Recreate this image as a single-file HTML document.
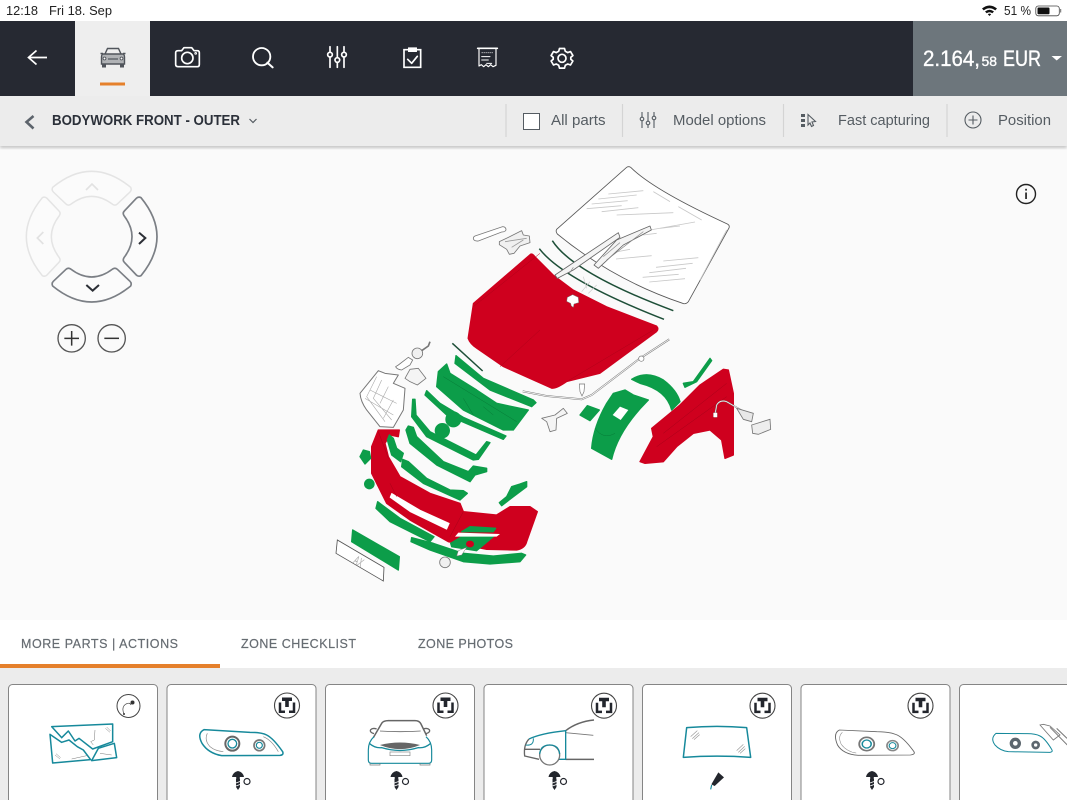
<!DOCTYPE html>
<html><head><meta charset="utf-8"><style>
html,body{margin:0;padding:0;background:#fafafa;width:1067px;height:800px;overflow:hidden}
svg{display:block;font-family:"Liberation Sans",sans-serif;filter:blur(.3px)}
</style></head><body>
<svg width="1067" height="800" viewBox="0 0 1067 800" xmlns="http://www.w3.org/2000/svg">
<defs>
<filter id="sh" x="-5%" y="-20%" width="110%" height="150%"><feGaussianBlur stdDeviation="1.5"/></filter>
<g id="badge"><circle cx="0" cy="0" r="12.500" fill="#fff" stroke="#444" stroke-width="1.100"/>
<path d="M-7 -3V6.200H-2M7 -3V6.200H2" fill="none" stroke="#23262d" stroke-width="2.500"/><path d="M-5 -8H5V-4.500H1.800V1.500H-1.800V-4.500H-5Z" fill="#23262d"/></g>
<g id="screw"><path d="M-6 -3Q-5 -8 0 -9Q5 -8 6 -3H1.800V-1H-1.800V-3Z" fill="#23262d"/><path d="M-2 -1H2V7L0 10L-2 7Z" fill="#23262d"/><path d="M-2 3L2 1.500M-2 6L2 4.500" stroke="#fff" stroke-width=".8"/><circle cx="9" cy="1.500" r="3" fill="#fff" stroke="#23262d" stroke-width="1.200"/></g>
</defs>

<!-- status bar -->
<rect width="1067" height="21" fill="#fff"/>
<text x="6" y="15" font-size="12.500" fill="#222" textLength="32" lengthAdjust="spacingAndGlyphs">12:18</text>
<text x="49" y="15" font-size="12.500" fill="#222" textLength="63" lengthAdjust="spacingAndGlyphs">Fri 18. Sep</text>
<g fill="#111"><path d="M982 8.500Q989.500 2.500 997 8.500L995.300 10.400Q989.500 6 983.700 10.400Z"/><path d="M985 11.500Q989.500 8 994 11.500L992.300 13.300Q989.500 11.200 986.700 13.300Z"/><path d="M987.800 14.300Q989.500 13 991.200 14.300L989.500 16Z"/></g>
<text x="1004" y="15" font-size="12.500" fill="#222" textLength="27" lengthAdjust="spacingAndGlyphs">51 %</text>
<rect x="1035.800" y="6" width="23.500" height="9.800" rx="2.500" fill="none" stroke="#444" stroke-width=".8"/>
<rect x="1037.500" y="7.500" width="12" height="6.800" rx="1" fill="#111"/><rect x="1060.200" y="9" width="1" height="3.500" fill="#666"/>

<!-- header -->
<rect y="21" width="1067" height="75" fill="#262932"/>
<rect x="75" y="21" width="75" height="75" fill="#eeeeee"/>
<rect x="913" y="21" width="154" height="75" fill="#6d767c"/>
<path d="M47 57.500H28.500M36.500 50.500L28.500 57.500L36.500 64.500" fill="none" stroke="#fff" stroke-width="1.700"/>
<g transform="translate(160,30) scale(.33333)" fill="none" stroke="#fff" stroke-width="5" stroke-linejoin="round" stroke-linecap="round">
<path d="M47 68Q47 62 55 62H65L72 53H95L102 62H112Q118 62 118 68V103Q118 110 112 110H55Q47 110 47 103Z"/>
<circle cx="82" cy="84" r="17"/><circle cx="107" cy="70" r="1.500"/>
<circle cx="305" cy="80" r="26" stroke-width="5.500"/><path d="M322 98L338 112" stroke-width="6"/>
<path d="M510 50V112M532 50V112M552 50V112"/>
<circle cx="510" cy="74" r="7" fill="#262932"/><circle cx="532" cy="90" r="7" fill="#262932"/><circle cx="552" cy="74" r="7" fill="#262932"/>
<path d="M745 59H732V112H782V59H770" stroke-linejoin="miter"/><rect x="745" y="53" width="25" height="12" fill="#fff" stroke-width="2"/><path d="M743 88L755 100L772 79"/>
<path d="M957 55V108L964 104L971 110L978 104L985 110L992 104L999 110L1008 106V55" stroke-width="3.500"/><path d="M953 55H1012" stroke-width="5"/>
<path d="M965 68H1000" stroke-width="2.500" stroke-dasharray="3 3" stroke-linecap="butt"/><path d="M965 80H990M965 90H985M980 100H995" stroke-width="3"/>
</g>
<g transform="translate(0,-.7)"><path d="M559.500 49.200L564.500 49.200L565.300 52L567.800 53.300L570.500 52.300L572.900 56.300L570.800 58L570.800 60L572.900 61.700L570.500 65.700L567.800 64.700L565.300 66L564.500 68.800L559.500 68.800L558.700 66L556.200 64.700L553.500 65.700L551.100 61.700L553.200 60L553.200 58L551.100 56.300L553.500 52.300L556.200 53.300L558.700 52Z" fill="none" stroke="#fff" stroke-width="1.700" stroke-linejoin="round"/><circle cx="562" cy="59" r="4" fill="none" stroke="#fff" stroke-width="1.700"/></g>
<!-- car icon -->
<g fill="none" stroke="#50545b" stroke-width="1.400"><path d="M105 54L107.500 48.500H118.500L121 54"/><path d="M103 54H123Q124.500 54.500 124.500 57V64H101.500V57Q101.500 54.500 103 54Z" fill="#b0b2b5"/><path d="M100.500 53.500H103M123 53.500H125.500" stroke-width="1.600"/><path d="M108 59H118" stroke-width="1.200"/><rect x="102" y="64" width="4" height="3.500" fill="#50545b" stroke="none"/><rect x="120" y="64" width="4" height="3.500" fill="#50545b" stroke="none"/><circle cx="104.500" cy="58.500" r="1.400" fill="#fff" stroke-width=".9"/><circle cx="121.500" cy="58.500" r="1.400" fill="#fff" stroke-width=".9"/></g>
<rect x="100" y="82.500" width="25" height="3" fill="#e5802b"/>
<!-- price -->
<g fill="#fff" stroke="#fff" stroke-width=".35">
<text x="923" y="66" font-size="22" textLength="57" lengthAdjust="spacingAndGlyphs">2.164,</text>
<text x="981.500" y="66" font-size="14" textLength="15.500" lengthAdjust="spacingAndGlyphs">58</text>
<text x="1003" y="66" font-size="22" textLength="38" lengthAdjust="spacingAndGlyphs">EUR</text>
</g>
<path d="M1051.500 56H1062L1056.700 60.500Z" fill="#fff"/>

<!-- toolbar -->
<rect y="143" width="1067" height="5" fill="#000" opacity=".22" filter="url(#sh)"/>
<rect y="96" width="1067" height="50" fill="#ececec"/>
<path d="M33.500 116L26.500 122L33.500 128.500" fill="none" stroke="#5d646c" stroke-width="2.600"/>
<text x="52" y="125" font-size="14.500" font-weight="700" fill="#2b3039" textLength="188" lengthAdjust="spacingAndGlyphs">BODYWORK FRONT - OUTER</text>
<path d="M249.500 119L253 122.500L256.500 119" fill="none" stroke="#555c62" stroke-width="1.200"/>
<g stroke="#d4d4d4" stroke-width="1.200"><path d="M506 104V137M622.500 104V137M783.500 104V137M947 104V137"/></g>
<rect x="523.500" y="113.500" width="16" height="16" fill="#fff" stroke="#555c62" stroke-width="1"/>
<g font-size="15" fill="#555c62">
<text x="551" y="125" textLength="54.500" lengthAdjust="spacingAndGlyphs">All parts</text>
<text x="673" y="125" textLength="93" lengthAdjust="spacingAndGlyphs">Model options</text>
<text x="838" y="125" textLength="92" lengthAdjust="spacingAndGlyphs">Fast capturing</text>
<text x="998" y="125" textLength="53" lengthAdjust="spacingAndGlyphs">Position</text>
</g>
<g fill="none" stroke="#555c62" stroke-width="1.100">
<path d="M642 112V128M648 112V128M654 112V128"/><circle cx="642" cy="119" r="1.800" fill="#ececec"/><circle cx="648" cy="123" r="1.800" fill="#ececec"/><circle cx="654" cy="118" r="1.800" fill="#ececec"/>
<path d="M808 114.500L815.500 121.500L812 122L813.500 125.500L811.500 126.500L810 123L808 125Z"/>
<circle cx="973" cy="120" r="8"/><path d="M973 115.500V124.500M968.500 120H977.500"/>
</g>
<g fill="#555c62"><rect x="801" y="114" width="4" height="3"/><rect x="801" y="119" width="4" height="3"/><rect x="801" y="124" width="4" height="3"/></g>

<!-- info -->
<circle cx="1026" cy="194" r="9.500" fill="none" stroke="#222" stroke-width="1.400"/>
<rect x="1025.200" y="192.500" width="1.700" height="6.500" fill="#222"/><rect x="1025.200" y="188.800" width="1.700" height="1.800" fill="#222"/>

<!-- nav pad -->
<g transform="translate(10,160) scale(.33333)">
<defs><path id="seg" d="M128 82Q245 -14 362 82Q366 90 360 96L322 132Q316 138 308 133Q245 85 182 133Q174 138 168 132L130 96Q124 90 128 82Z"/></defs>
<use href="#seg" fill="#fbfbfb" stroke="#e4e4e4" stroke-width="4.500"/>
<use href="#seg" transform="rotate(-90 245 230)" fill="#fbfbfb" stroke="#e4e4e4" stroke-width="4.500"/>
<use href="#seg" transform="rotate(90 245 230)" fill="#fbfbfb" stroke="#7b7f85" stroke-width="5"/>
<use href="#seg" transform="rotate(180 245 230)" fill="#fbfbfb" stroke="#7b7f85" stroke-width="5"/>
<path d="M228 90L246 72L264 90" fill="none" stroke="#e2e2e2" stroke-width="5"/>
<path d="M100 216L82 234L100 252" fill="none" stroke="#e2e2e2" stroke-width="5"/>
<path d="M387 218L406 234L387 252" fill="none" stroke="#2c2f36" stroke-width="6"/>
<path d="M229 375L248 392L267 375" fill="none" stroke="#2c2f36" stroke-width="6"/>
<circle cx="185" cy="535" r="41" fill="none" stroke="#555" stroke-width="4"/><path d="M185 513V557M163 535H207" stroke="#333" stroke-width="4.500"/>
<circle cx="305" cy="535" r="41" fill="none" stroke="#555" stroke-width="4"/><path d="M283 535H327" stroke="#333" stroke-width="4.500"/>
</g>

<!-- exploded drawing: upper -->
<g transform="translate(440,160) scale(.33333)">
<path d="M350 208L560 22Q566 18 572 22Q640 90 862 192Q870 196 867 204L745 425Q738 434 728 430Q520 360 352 222Q346 214 350 208Z" fill="#fff" stroke="#555" stroke-width="2.500"/>
<g stroke="#c8c8c8" stroke-width="2.500" fill="none"><path d="M505 102L610 92M475 117L590 105M455 132L563 122M440 146L545 137M485 155L595 143M530 165L700 158M630 210L765 186M660 205L720 198M610 225L650 220M670 303L775 293M648 322L758 310M628 338L738 325M608 352L716 343M628 366L735 356M528 297L635 287M495 282L570 268M715 140L785 180M640 95L690 125M860 210L780 360"/></g>
<path d="M337 242Q400 340 700 452" fill="none" stroke="#1e4f38" stroke-width="4.500"/>
<path d="M298 266Q370 360 672 478" fill="none" stroke="#1e4f38" stroke-width="4.500"/>
<path d="M272 282L100 430L84 535Q90 552 110 565L190 620L335 685Q350 686 380 665L480 640L650 515Q658 507 650 498L500 440L400 390L340 345L285 290Q278 280 272 282Z" fill="#cf001e" stroke="#cf001e" stroke-width="3" stroke-linejoin="round"/>
<path d="M100 440L300 280M180 620L300 510M380 665L640 510" stroke="#b00018" stroke-width="1.500" fill="none"/>
<path d="M382 412L398 404L415 412L416 428L402 432L400 442L394 438L392 430L380 424Z" fill="#fff" stroke="#777" stroke-width="1.500"/>
<path d="M345 345L535 218L540 232L400 330L352 355Z" fill="#f4f4f4" stroke="#666" stroke-width="2.500" stroke-linejoin="round"/>
<path d="M462 315L530 240L630 198L634 210L550 255L475 325Z" fill="#f4f4f4" stroke="#666" stroke-width="2.500" stroke-linejoin="round"/>
<path d="M400 322L388 340M490 290L540 248M500 300L610 215" stroke="#888" stroke-width="2"/>
<g stroke="#ccc" stroke-width="2"><path d="M430 350L440 385M450 365L425 395M470 375L445 400"/></g>
<path d="M105 228L188 200Q198 200 198 210Q195 216 185 216L115 243Q102 244 100 236Q100 230 105 228Z" fill="#fff" stroke="#777" stroke-width="2.500"/>
<path d="M178 245L205 232L245 212L250 225L268 228L270 248L240 258L222 280L208 283L200 268L178 254Z" fill="#f0f0f0" stroke="#777" stroke-width="2.500" stroke-linejoin="round"/>
<path d="M195 245L260 235M215 262L250 240" stroke="#999" stroke-width="2.500"/>
<path d="M37 550L128 633" stroke="#1e4f38" stroke-width="4.500"/>
<path d="M248 694L320 708L425 718L455 705L600 595L688 538" fill="none" stroke="#777" stroke-width="5.500"/>
<path d="M248 694L320 708L425 718L455 705L600 595L688 538" fill="none" stroke="#fff" stroke-width="2.500"/>
<circle cx="604" cy="596" r="8" fill="#fff" stroke="#777" stroke-width="2"/>
<path d="M418 672H434L432 695L426 708L420 695Z" fill="#fff" stroke="#777" stroke-width="2"/>
</g>

<!-- exploded drawing: lower left -->
<g transform="translate(330,340) scale(.33333)">
<path d="M145 92L90 160Q92 185 110 210L150 260L190 262L220 210L225 145L190 130L205 105L165 100Z" fill="#fff" stroke="#777" stroke-width="3" stroke-linejoin="round"/>
<g stroke="#aaa" stroke-width="1.800" fill="none"><path d="M140 110L110 170L165 245M155 120L130 175L185 240M175 140L150 190M190 180L160 235M120 150L200 190M105 175L190 225"/></g>
<path d="M205 75L235 52L248 60L240 75L215 90Q200 88 197 80Z" fill="#fff" stroke="#777" stroke-width="2.500"/>
<circle cx="262" cy="40" r="16" fill="#f0f0f0" stroke="#777" stroke-width="2.500"/>
<path d="M275 32L295 18L300 5" fill="none" stroke="#777" stroke-width="5"/>
<path d="M240 88L265 85L288 115L262 135L240 125L225 115Z" fill="#f4f4f4" stroke="#777" stroke-width="2.500" stroke-linejoin="round"/>
<path d="M145 270L125 320L125 400L170 490L240 540L355 605L470 628L560 630Q585 625 590 605L622 515L600 500L540 500L500 525L400 515L390 490L300 460L210 410L175 350L165 310L180 285L205 290L208 270Z" fill="#cf001e" stroke="#cf001e" stroke-width="4" stroke-linejoin="round"/>
<path d="M185 460L180 472L240 515L350 568L358 550L270 510Z" fill="#fff" stroke="#fff" stroke-width="2" stroke-linejoin="round"/>
<path d="M180 430L200 470M400 515L360 590M145 275L175 355" stroke="#a80018" stroke-width="1.500" fill="none"/>
<g fill="#0c9d49" stroke="#0c9d49" stroke-width="4" stroke-linejoin="round">
<path d="M378 47L460 115L610 180L618 188L605 200L480 150L375 70Z"/>
<path d="M350 72L325 95L320 140L400 210L520 270L550 270L595 210L500 190L440 150L360 100Z"/>
<path d="M290 152L285 165L350 225L520 298L528 288L400 232L330 190Z"/>
<circle cx="370" cy="238" r="22"/><circle cx="337" cy="272" r="21"/>
<path d="M248 178L245 230L290 290L430 360L445 358L480 308L470 305L438 345L300 275L258 225L255 178Z"/>
<path d="M235 258L228 270L240 310L320 375L420 425L435 405L470 395L470 385L430 378L415 395L340 365L260 290L250 262Z"/>
<path d="M218 358L215 380L280 430L390 480L412 460L400 452L360 450L290 415L235 365Z"/>
<path d="M178 285L172 300L185 345L212 365L220 340L200 325L190 295Z"/>
<path d="M100 330L90 350L105 372L122 355L118 335Z"/><circle cx="118" cy="432" r="14"/>
<path d="M143 485L138 505L180 545L300 605L312 590L210 535Z"/>
<path d="M245 593L243 605L300 630L400 665L480 672L570 665L587 645L575 640L490 648L400 640L310 610Z"/>
<path d="M68 570L65 605L205 690L208 650Z"/>
<path d="M395 590L362 610L365 620L440 632L490 590L450 590Z"/>
<path d="M395 575L490 575L497 565L420 560Z"/>
<path d="M590 425L570 432L545 440L530 470L508 488L515 497L550 470L590 440Z"/>
</g>
<path d="M385 578L510 582L500 590L375 590Z" fill="#fff"/>
<ellipse cx="420" cy="612" rx="12" ry="10" fill="#cf001e"/>
<g stroke="#067a36" stroke-width="1.500" fill="none"><path d="M340 110L560 245M400 175L430 225M460 200L490 225"/></g>
<path d="M385 632L410 622L395 645L380 648Z" fill="#fff" stroke="#777" stroke-width="1.500"/>
<circle cx="345" cy="667" r="16" fill="#f0f0f0" stroke="#777" stroke-width="2.500"/>
<path d="M22 600L18 640L160 723L162 682Z" fill="#fff" stroke="#555" stroke-width="2.500"/>
<text x="0" y="0" transform="translate(68,668) rotate(30) scale(1.300,2.300)" font-size="16" fill="#aaa">AX</text>
</g>

<!-- exploded drawing: right -->
<g transform="translate(530,350) scale(.33333)">
<path d="M580 58L510 105L450 165L365 235L370 260L330 335L345 340L400 335L440 290L490 250L540 240L575 270L585 325L610 315L610 130L595 60Z" fill="#cf001e" stroke="#cf001e" stroke-width="4" stroke-linejoin="round"/>
<path d="M400 250L590 100M380 290L590 140" stroke="#a80018" stroke-width="1.500" fill="none"/>
<g fill="#0c9d49" stroke="#0c9d49" stroke-width="4" stroke-linejoin="round">
<path d="M250 130L230 160Q190 230 185 295L245 328Q265 240 355 150L310 135L285 120Z"/>
<path d="M305 88Q350 60 400 90Q440 120 450 155L425 180Q410 120 330 100Z"/>
<path d="M540 25L545 32L500 95L465 112L460 100L490 95Z"/>
<path d="M172 167L208 180L180 212L150 195Z"/>
</g>
<path d="M270 170L295 180L272 210L248 195Z" fill="#fff"/>
<path d="M195 235Q220 270 255 250" stroke="#067a36" stroke-width="1.500" fill="none"/>
<path d="M100 175L112 190L80 205L78 240L60 245L50 215L35 205L75 195Z" fill="#f4f4f4" stroke="#777" stroke-width="2.500" stroke-linejoin="round"/>
<path d="M555 195L560 165Q570 148 590 155L650 190" fill="none" stroke="#777" stroke-width="4.500"/>
<path d="M555 195L560 165Q570 148 590 155L650 190" fill="none" stroke="#fff" stroke-width="2"/>
<rect x="550" y="188" width="12" height="14" rx="2" fill="#fff" stroke="#777" stroke-width="1"/>
<path d="M620 175L670 190L665 215L640 208Z" fill="#e8e8e8" stroke="#777" stroke-width="2.500"/>
<path d="M720 208L665 225L668 250L685 253L722 238Z" fill="#eee" stroke="#777" stroke-width="2.500"/>
</g>

<!-- tabs -->
<rect y="620" width="1067" height="48" fill="#fff"/>
<rect y="668" width="1067" height="132" fill="#ececec"/>
<rect y="664" width="220" height="4" fill="#e5802b"/>
<g font-size="12.500" fill="#666c72" stroke="#666c72" stroke-width=".2">
<text x="21" y="648" textLength="157">MORE PARTS | ACTIONS</text>
<text x="241" y="648" textLength="115">ZONE CHECKLIST</text>
<text x="418" y="648" textLength="95">ZONE PHOTOS</text>
</g>

<!-- cards -->
<g fill="#fff" stroke="#858585" stroke-width="1">
<rect x="8.500" y="684.500" width="149" height="130" rx="4"/>
<rect x="167" y="684.500" width="149" height="130" rx="4"/>
<rect x="325.500" y="684.500" width="149" height="130" rx="4"/>
<rect x="484" y="684.500" width="149" height="130" rx="4"/>
<rect x="642.500" y="684.500" width="149" height="130" rx="4"/>
<rect x="801" y="684.500" width="149" height="130" rx="4"/>
<rect x="959.500" y="684.500" width="149" height="130" rx="4"/>
</g>
<!-- card 1 -->
<circle cx="128.500" cy="706" r="11.500" fill="#fff" stroke="#444" stroke-width="1"/>
<path d="M124 714Q121 707 126 704Q130 702 131 705" fill="none" stroke="#444" stroke-width=".7"/><circle cx="132.500" cy="702.500" r="2" fill="#333"/><circle cx="124" cy="714" r="1" fill="#333"/>
<g transform="translate(0,625) scale(.33333)" fill="none">
<path d="M155 305L338 297L338 350L278 372L237 340L225 348L205 318L185 338Z" stroke="#16899b" stroke-width="4.500" stroke-linejoin="round"/>
<path d="M150 328L158 414L272 404L250 375L232 365L207 345L185 352Z" stroke="#16899b" stroke-width="4.500" stroke-linejoin="round"/>
<path d="M275 407L295 370L343 355L350 398Z" stroke="#16899b" stroke-width="4.500" stroke-linejoin="round"/>
<path d="M285 315L283 345L272 350L280 360M300 385L335 390M215 402L260 392" stroke="#777" stroke-width="1.500"/>
<path d="M316 310L330 322M320 306L332 318M165 390L180 402M168 386L182 398" stroke="#888" stroke-width="1.500"/>
</g>
<!-- card 2 -->
<use href="#badge" x="287" y="705.500"/>
<use href="#screw" x="238" y="780"/>
<g transform="translate(0,625) scale(.33333)" fill="none">
<path d="M612 314Q590 325 606 355Q625 385 665 392L840 391Q852 390 848 380Q820 340 800 330Q785 322 750 322Z" stroke="#16899b" stroke-width="4.500"/>
<path d="M622 325Q612 345 630 365Q645 378 670 380M790 335Q815 345 835 380" stroke="#888" stroke-width="2"/>
<circle cx="697" cy="356" r="21" stroke="#666" stroke-width="6"/><circle cx="697" cy="356" r="13" stroke="#16899b" stroke-width="4"/>
<circle cx="778" cy="361" r="16" stroke="#777" stroke-width="5"/><circle cx="778" cy="361" r="9" stroke="#16899b" stroke-width="3.500"/>
</g>
<!-- card 3 -->
<use href="#badge" x="445.500" y="705.500"/>
<use href="#screw" x="396.500" y="780"/>
<g transform="translate(0,625) scale(.33333)" fill="none">
<path d="M1120 338L1145 295Q1150 287 1165 287H1245Q1258 287 1263 297L1280 332" stroke="#666" stroke-width="4.500"/>
<path d="M1122 326Q1108 322 1112 314Q1118 308 1130 312M1278 326Q1292 322 1288 314Q1282 308 1270 312" stroke="#666" stroke-width="4"/>
<path d="M1140 318Q1200 322 1262 318" stroke="#666" stroke-width="2.500"/>
<path d="M1122 335Q1105 350 1105 375V405Q1105 415 1115 415H1285Q1295 415 1295 405V375Q1295 350 1278 335" stroke="#16899b" stroke-width="3.500"/>
<path d="M1108 355Q1125 370 1145 368Q1200 385 1255 368Q1275 370 1292 355" stroke="#16899b" stroke-width="4"/>
<path d="M1140 360Q1200 345 1260 360Q1200 385 1140 360Z" fill="#666"/>
<rect x="1170" y="381" width="60" height="11" stroke="#888" stroke-width="2"/>
<path d="M1110 415V420H1140V415M1260 415V420H1290V415" stroke="#777" stroke-width="2"/>
</g>
<!-- cards 4-7 -->
<use href="#badge" x="604" y="705.700"/>
<use href="#badge" x="762.500" y="705.700"/>
<use href="#badge" x="920.500" y="705.700"/>
<use href="#screw" x="554.500" y="780"/>
<use href="#screw" x="872" y="780"/>
<g transform="translate(484,690) scale(.33333)" fill="none">
<!-- car side -->
<path d="M245 122Q280 95 330 90" stroke="#666" stroke-width="4.500"/>
<path d="M245 128L328 136" stroke="#777" stroke-width="2.500"/>
<path d="M245 208H330" stroke="#666" stroke-width="4.500"/>
<path d="M135 147Q118 165 122 198L165 208M120 178H168" stroke="#666" stroke-width="4"/>
<path d="M135 147Q170 130 245 122V208H225" stroke="#16899b" stroke-width="4"/>
<path d="M125 165Q150 168 148 145" stroke="#16899b" stroke-width="3"/>
<circle cx="197" cy="195" r="30" fill="#fff" stroke="#777" stroke-width="4"/>
<path d="M167 192Q170 165 197 165Q224 165 227 192" stroke="#16899b" stroke-width="4"/>
<!-- windshield -->
<path d="M608 113Q700 105 788 113L800 202Q700 195 598 202Z" stroke="#16899b" stroke-width="4.500" stroke-linejoin="round"/>
<path d="M620 140L640 122M625 146L645 128M630 149L647 134M758 182L778 163M763 187L782 169M768 190L784 176" stroke="#999" stroke-width="2"/>
<path d="M703 247L720 262L692 288L682 283Z" fill="#23262d"/><path d="M683 285L680 298" stroke="#16899b" stroke-width="3.500"/>
</g>
<g transform="translate(480,675) scale(.37436,.33333)" fill="none">
<!-- card 6 lamp -->
<path d="M960 165Q942 175 955 210Q970 238 1010 241L1150 240Q1165 238 1158 228Q1130 185 1110 178Q1090 170 1060 170Z" stroke="#666" stroke-width="2.500"/>
<path d="M968 172Q955 185 965 208Q980 230 1005 234" stroke="#888" stroke-width="1.500"/>
<circle cx="1033" cy="207" r="20" stroke="#777" stroke-width="5"/><circle cx="1033" cy="207" r="12" stroke="#16899b" stroke-width="4"/>
<circle cx="1102" cy="212" r="15" stroke="#888" stroke-width="4.500"/><circle cx="1102" cy="212" r="9" stroke="#16899b" stroke-width="3"/>
</g>
<!-- card 7 lamp -->
<g transform="translate(950,690) scale(.33333)" fill="none">
<path d="M138 130Q120 145 135 165Q150 182 175 185L300 187Q310 186 305 178Q285 145 270 138Q255 130 225 131Z" stroke="#16899b" stroke-width="3"/>
<circle cx="196" cy="160" r="12" stroke="#5c666e" stroke-width="10"/><circle cx="257" cy="165" r="9" stroke="#5c666e" stroke-width="8"/>
<path d="M270 105L310 150L330 135L300 108L280 103Z" fill="#fff" stroke="#777" stroke-width="2.500"/>
<path d="M300 112L352 165M320 115L351 145" stroke="#777" stroke-width="3"/>
</g>
</svg>
</body></html>
